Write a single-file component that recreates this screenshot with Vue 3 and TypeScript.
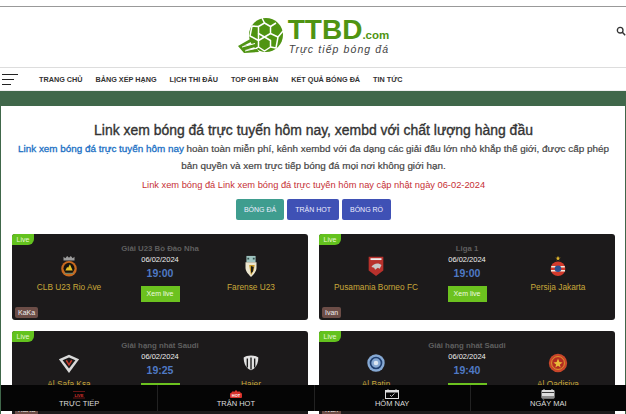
<script setup lang="ts">
interface Team {
  name: string
  crest: string
}

interface Match {
  league: string
  date: string
  time: string
  home: Team
  away: Team
  host: string
}

const menu: string[] = ['TRANG CHỦ', 'BẢNG XẾP HẠNG', 'LỊCH THI ĐẤU', 'TOP GHI BÀN', 'KẾT QUẢ BÓNG ĐÁ', 'TIN TỨC']

const matches: Match[] = [
  {
    league: 'Giải U23 Bồ Đào Nha',
    date: '06/02/2024',
    time: '19:00',
    home: { name: 'CLB U23 Rio Ave', crest: 'rio' },
    away: { name: 'Farense U23', crest: 'farense' },
    host: 'KaKa'
  },
  {
    league: 'Liga 1',
    date: '06/02/2024',
    time: '19:00',
    home: { name: 'Pusamania Borneo FC', crest: 'borneo' },
    away: { name: 'Persija Jakarta', crest: 'persija' },
    host: 'Ivan'
  },
  {
    league: 'Giải hạng nhất Saudi',
    date: '06/02/2024',
    time: '19:25',
    home: { name: 'Al Safa Ksa', crest: 'safa' },
    away: { name: 'Hajer', crest: 'hajer' },
    host: 'KaKa'
  },
  {
    league: 'Giải hạng nhất Saudi',
    date: '06/02/2024',
    time: '19:40',
    home: { name: 'Al Batin', crest: 'batin' },
    away: { name: 'Al Qadisiya', crest: 'qadisiya' },
    host: 'Ivan'
  }
]
</script>

<template>
  <div class="page">
    <header class="masthead">
      <a class="logo">
        <svg class="logo__ball" viewBox="0 0 46 38" width="46" height="38">
          <circle cx="28" cy="18" r="17" fill="#4f9412" />
          <g fill="none" stroke="#fff" stroke-width="1.500" stroke-linejoin="round">
            <path d="M26.500 6L32.500 9.500V16.500L26.500 20L20.500 16.500V9.500z" />
            <path d="M26.500 20L32.500 23.500V30L26.500 34L20.500 30V23.500z" />
            <path d="M26.500 6L24 1M32.500 9.500L38 6M32.500 16.500L40 20L38 31L32.500 30M40 20L45 14" />
            <path d="M20.500 9.500L14 9M14 9L12 19L20.500 23.500M20.500 16.500V23.500M20.500 30L16 33" />
          </g>
          <path d="M0 29L14 21L15 24L5 29L16 27L17 30L7 33L19 32L21 35L6 36z" fill="#4f9412" />
          <path d="M4 30L17 26.500M7 34L19 31" stroke="#fff" stroke-width="1" />
        </svg>
        <span class="logo__text">
          <span class="logo__name">TTBD<small>.com</small></span>
          <span class="logo__tag">Trực tiếp bóng đá</span>
        </span>
      </a>
      <svg class="search" viewBox="0 0 12 12" width="10" height="10">
        <circle cx="5" cy="5" r="3.400" fill="none" stroke="#333" stroke-width="1.600" />
        <path d="M7.600 7.600L11 11" stroke="#333" stroke-width="1.800" />
      </svg>
    </header>

    <nav class="menu">
      <span class="burger"><i></i><i></i><i></i></span>
      <a v-for="item in menu" :key="item" class="menu__item">{{ item }}</a>
    </nav>

    <div class="band"></div>

    <main class="content">
      <h1 class="title">Link xem bóng đá trực tuyến hôm nay, xembd với chất lượng hàng đầu</h1>
      <p class="intro">
        <a>Link xem bóng đá trực tuyến hôm nay</a> hoàn toàn miễn phí, kênh xembd với đa dạng các giải đấu lớn nhỏ khắp thế giới, được cấp phép bản quyền và xem trực tiếp bóng đá mọi nơi không giới hạn.
      </p>
      <p class="updated">Link xem bóng đá Link xem bóng đá trực tuyến hôm nay cập nhật ngày 06-02-2024</p>

      <div class="tabs">
        <button type="button" class="tab tab--active">BÓNG ĐÁ</button>
        <button type="button" class="tab">TRẬN HOT</button>
        <button type="button" class="tab">BÓNG RỔ</button>
      </div>

      <section class="grid">
        <article v-for="m in matches" :key="m.time + m.home.name" class="card">
          <span class="card__live">Live</span>
          <div class="card__league">{{ m.league }}</div>
          <div class="card__row">
            <div v-for="(team, i) in [m.home, m.away]" :key="team.name" class="team" :class="{ 'team--away': i === 1 }">
              <svg class="crest" viewBox="0 0 24 24" width="22" height="22">
                <template v-if="team.crest === 'rio'">
                  <path d="M6 6V2l2 1.500L10 1l2 2 2-2 2 2.500L18 2v4z" fill="#9c9c9c" />
                  <circle cx="12" cy="15" r="8.500" fill="#c8691f" />
                  <circle cx="12" cy="14.500" r="6" fill="#15130e" />
                  <path d="M8 17l2-4 1 1 2-4 3 7z" fill="#e3c02a" />
                  <path d="M7 20h10" stroke="#7a8a6a" stroke-width="1.200" />
                </template>
                <template v-else-if="team.crest === 'farense'">
                  <path d="M7 1h10v7H7z" fill="#9fc4c0" />
                  <path d="M8 3h2v2H8zM14 3h2v2h-2z" fill="#33524e" />
                  <path d="M6 8h12v6c0 4-3 7-6 10-3-3-6-6-6-10z" fill="#ece6cf" />
                  <path d="M10 11l6 0-1 6-3 5-1-5z" fill="#c79a2a" />
                  <path d="M12 12l3 1-1 5-2 2z" fill="#1f1d17" />
                </template>
                <template v-else-if="team.crest === 'borneo'">
                  <path d="M4 2h16v15l-8 6-8-6z" fill="#b8312c" />
                  <path d="M7 13c2-4 8-5 11-2l-2 4-2-1-3 2-1-2z" fill="#c9c9c9" />
                  <path d="M6 3.500h12v2H6z" fill="#eee" />
                </template>
                <template v-else-if="team.crest === 'persija'">
                  <path d="M12 1l1 2h2l-2 1 .600 2-1.600-1-1.600 1 .600-2-2-1h2z" fill="#e0b52b" />
                  <circle cx="12" cy="15" r="8" fill="#d23a2c" />
                  <path d="M4.600 12h14.800v1.600H4.600zM4.300 16.400h15.400V18H4.300z" fill="#f1e9dc" />
                  <circle cx="12" cy="15" r="3.600" fill="#2c4f8f" />
                </template>
                <template v-else-if="team.crest === 'safa'">
                  <path d="M1 8l11-5 11 5-11 15z" fill="#d9d9d9" />
                  <path d="M5 9l7-3 7 3-7 9z" fill="#1b1a1a" />
                  <path d="M9 9l3 5 3-5" fill="none" stroke="#c0392b" stroke-width="1.600" />
                </template>
                <template v-else-if="team.crest === 'hajer'">
                  <path d="M4 6c3-3 13-3 16 0 0 7-3 12-8 14-5-2-8-7-8-14z" fill="#e2e2e2" />
                  <path d="M8 7v10M12 6v13M16 7v10" stroke="#1a1a1a" stroke-width="1.500" />
                </template>
                <template v-else-if="team.crest === 'batin'">
                  <circle cx="12" cy="12" r="9.500" fill="#86a9d4" />
                  <circle cx="12" cy="12" r="6" fill="none" stroke="#1f3f70" stroke-width="1.800" />
                  <circle cx="12" cy="12" r="2.500" fill="#dbe6f2" />
                </template>
                <template v-else>
                  <circle cx="12" cy="12" r="10" fill="#c9462a" />
                  <circle cx="12" cy="12" r="7" fill="#b22a22" stroke="#e0a02a" stroke-width="1" />
                  <path d="M12 7l1.500 4 3.500 .400-3 2.200 1 3.400-3-2-3 2 1-3.400-3-2.200 3.500-.400z" fill="#e8b93a" />
                </template>
              </svg>
              <span class="team__name">{{ team.name }}</span>
            </div>
            <div class="card__mid">
              <div class="card__date">{{ m.date }}</div>
              <div class="card__time">{{ m.time }}</div>
              <a class="card__watch">Xem live</a>
            </div>
          </div>
          <span class="card__host">{{ m.host }}</span>
        </article>
      </section>
    </main>

    <footer class="dock">
      <a class="dock__item">
        <svg viewBox="0 0 16 9" width="16" height="9">
          <path d="M2 1.500h12M2 8h12" stroke="#7d1a1a" stroke-width=".800" />
          <text x="8" y="6.500" text-anchor="middle" class="dock__mark">LIVE</text>
        </svg>
        TRỰC TIẾP
      </a>
      <a class="dock__item">
        <svg viewBox="0 0 16 9" width="16" height="9">
          <path d="M3 3l2-2 1 1 2-2 2 2 1-1 2 2z" fill="#d8312c" />
          <rect x="2" y="3" width="12" height="5" rx="1" fill="#d8312c" />
          <text x="8" y="7" text-anchor="middle" class="dock__mark dock__mark--hot">HOT</text>
        </svg>
        TRẬN HOT
      </a>
      <a class="dock__item">
        <svg viewBox="0 0 14 10" width="14" height="10">
          <rect x=".500" y="1.500" width="13" height="8" fill="none" stroke="#ddd" />
          <path d="M.500 2h13V3.500H.500z" fill="#ddd" />
          <path d="M3 .200v2M11 .200v2" stroke="#ddd" />
          <path d="M5 6l1.500 1.500L9.500 4.500" fill="none" stroke="#ddd" stroke-width=".800" />
        </svg>
        HÔM NAY
      </a>
      <a class="dock__item">
        <svg viewBox="0 0 14 10" width="14" height="10">
          <rect x=".500" y="1" width="13" height="8.500" rx="1" fill="#ddd" />
          <path d="M1 3.500h12M1 8h12" stroke="#111" stroke-width=".800" />
          <path d="M3 0v2M11 0v2" stroke="#ddd" />
        </svg>
        NGÀY MAI
      </a>
    </footer>
  </div>
</template>

<style>
html,
body {
  margin: 0;
  overflow: hidden;
  background: #fff;
}
</style>

<style scoped>
.page {
  height: 414px;
  overflow: hidden;
  font-family: 'Liberation Sans', Arial, sans-serif;
  color: #333;
  padding-top: 6px;
  box-sizing: border-box;
}

.masthead {
  position: relative;
  height: 60px;
  border-top: 1px solid #999;
  border-bottom: 1px solid #ddd;
  display: flex;
  justify-content: center;
  align-items: center;
}

.logo {
  display: flex;
  align-items: flex-start;
  gap: 4px;
  margin-left: 1px;
  margin-bottom: 2px;
}

.logo__text {
  display: flex;
  flex-direction: column;
}

.logo__name {
  margin-top: 2px;
  height: 22px;
  font-size: 28px;
  line-height: 22px;
  font-weight: 700;
  color: #4f9412;
}

.logo__name small {
  font-size: 11.5px;
}

.logo__tag {
  margin-top: 2px;
  font-size: 10.5px;
  line-height: 12px;
  font-style: italic;
  letter-spacing: 1.1px;
  color: #444;
  margin-left: 1px;
}

.search {
  position: absolute;
  right: 0;
  top: 19px;
}

.menu {
  height: 22px;
  display: flex;
  align-items: center;
  gap: 13px;
  padding-left: 2px;
  border-bottom: 1px solid #eee;
}

.burger {
  width: 16px;
  margin-right: 8px;
  display: flex;
  flex-direction: column;
  gap: 4px;
}

.burger i {
  display: block;
  height: 1px;
  background: #222;
}

.burger i:nth-child(2) {
  width: 12px;
}

.burger i:nth-child(3) {
  width: 9px;
}

.menu__item {
  font-size: 7.25px;
  font-weight: 700;
  color: #333;
}

.band {
  height: 15px;
  background: #40674a;
}

.content {
  border-left: 1px solid #40674a;
  border-right: 1px solid #40674a;
  padding: 15px 10px 0 11px;
}

.title {
  margin: 0;
  font-size: 13.95px;
  line-height: 18px;
  font-weight: 400;
  -webkit-text-stroke: 0.35px #333;
  text-align: center;
  color: #333;
}

.intro {
  margin: 1px 0 0;
  font-size: 9.9px;
  line-height: 17px;
  font-weight: 400;
  -webkit-text-stroke: 0.2px #444;
  text-align: center;
  color: #444;
}

.intro a {
  color: #1a6fc4;
  -webkit-text-stroke: 0.3px #1a6fc4;
}

.updated {
  margin: 5px 0 0;
  font-size: 9.3px;
  line-height: 12px;
  text-align: center;
  color: #c62f35;
}

.tabs {
  margin-top: 8px;
  display: flex;
  justify-content: center;
  gap: 3px;
}

.tab {
  height: 21px;
  padding: 0 8px;
  border: none;
  border-radius: 2px;
  font-family: inherit;
  font-size: 7px;
  color: #eef;
  background: #3f51b5;
}

.tab--active {
  background: #3f9d8f;
}

.grid {
  margin-top: 14px;
  display: grid;
  grid-template-columns: 296px 296px;
  column-gap: 11px;
  row-gap: 11px;
}

.card {
  position: relative;
  height: 86px;
  padding-top: 9px;
  box-sizing: border-box;
  border-radius: 3px;
  background: #1c1a1b;
  color: #fff;
}

.card__live {
  position: absolute;
  left: 0;
  top: 0;
  width: 22px;
  height: 11px;
  border-radius: 3px 0 6px 0;
  background: #63c21e;
  font-size: 7px;
  line-height: 11px;
  text-align: center;
  color: #e8f7d8;
}

.card__league {
  height: 12px;
  font-size: 7.8px;
  line-height: 12px;
  font-weight: 700;
  text-align: center;
  color: #5f5f5f;
}

.card__row {
  display: grid;
  grid-template-columns: 114px 68px 114px;
}

.team {
  grid-column: 1;
  grid-row: 1;
  display: flex;
  flex-direction: column;
  align-items: center;
}

.team--away {
  grid-column: 3;
}

.crest {
  margin-bottom: 4px;
}

.team__name {
  font-size: 8.3px;
  line-height: 12px;
  color: #c9a83a;
  white-space: nowrap;
}

.card__mid {
  grid-column: 2;
  grid-row: 1;
  display: flex;
  flex-direction: column;
  align-items: center;
}

.card__date {
  font-size: 7.5px;
  line-height: 10px;
  color: #eee;
}

.card__time {
  font-size: 10.5px;
  line-height: 16px;
  font-weight: 700;
  color: #4f79c4;
}

.card__watch {
  margin-top: 5px;
  width: 39px;
  height: 16px;
  background: #6cc21f;
  font-size: 7px;
  line-height: 16px;
  text-align: center;
  color: #eefbe0;
}

.card__host {
  position: absolute;
  left: 3px;
  bottom: 2px;
  padding: 0 3px;
  height: 11px;
  border-radius: 2px;
  background: #6c4d47;
  font-size: 7px;
  line-height: 11px;
  color: #eee;
}

.dock {
  position: fixed;
  left: 1px;
  right: 0;
  bottom: 3px;
  height: 26px;
  display: grid;
  grid-template-columns: repeat(4, 1fr);
  background: #050505;
}

.dock__item {
  display: flex;
  flex-direction: column;
  align-items: center;
  justify-content: flex-end;
  padding-bottom: 3px;
  font-size: 7.5px;
  line-height: 9px;
  color: #ddd;
  border-left: 1px solid #222;
}

.dock__item:first-child {
  border-left: none;
}

.dock__mark {
  font-size: 4px;
  font-weight: 700;
  fill: #d8312c;
}

.dock__mark--hot {
  fill: #fff;
}
</style>
